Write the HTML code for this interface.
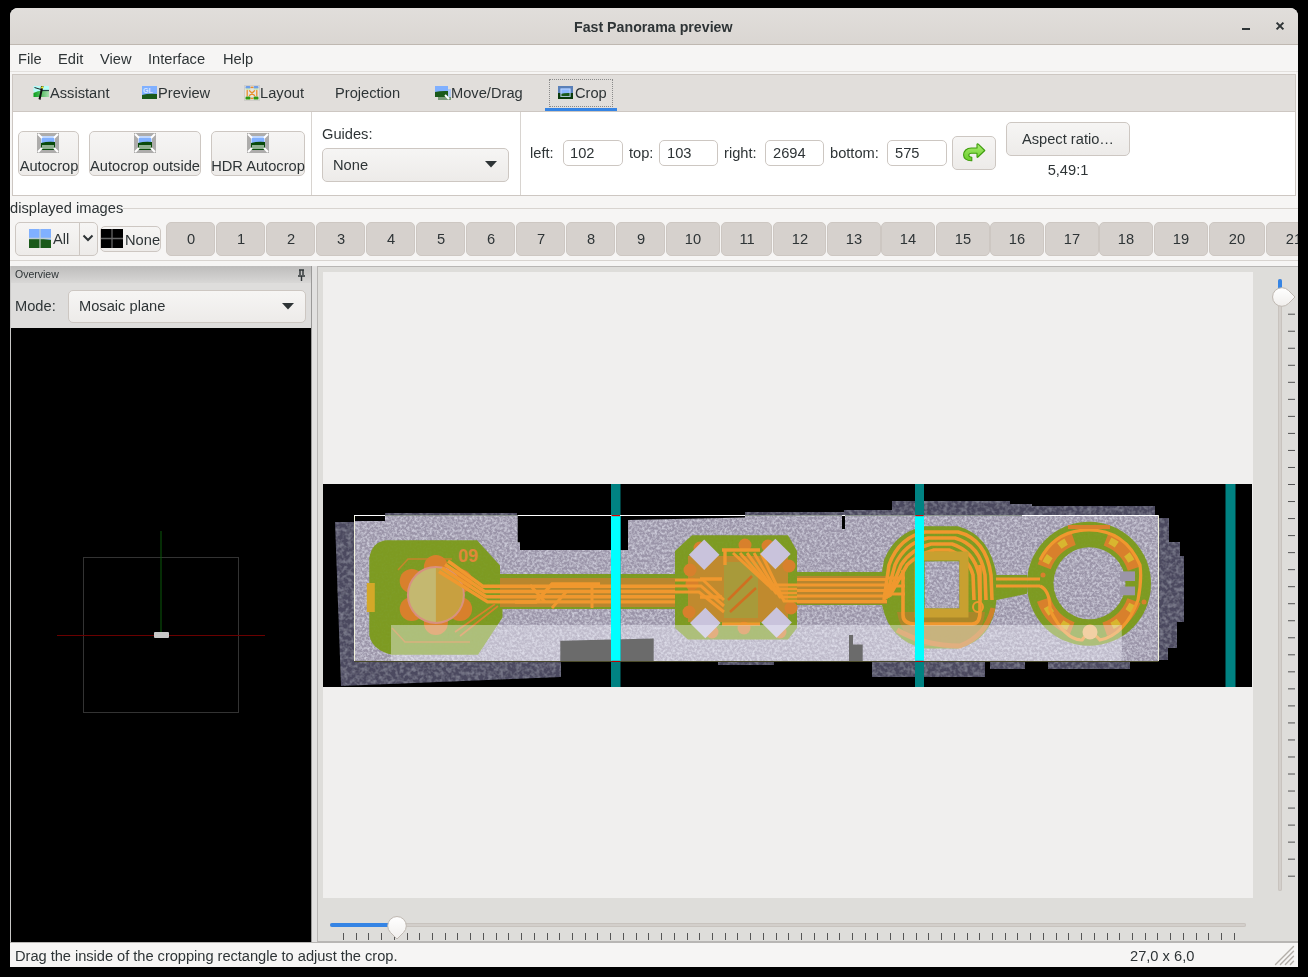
<!DOCTYPE html>
<html><head><meta charset="utf-8"><style>
html,body{margin:0;padding:0;width:1308px;height:977px;overflow:hidden;background:#000;}
body{position:relative;font-family:"Liberation Sans", sans-serif;}
</style></head><body>
<div style="position:absolute;left:10px;top:8px;width:1288px;height:959px;background:#f6f5f4;border-radius:8px 8px 0 0;overflow:hidden;"></div>
<div style="position:absolute;left:10px;top:8px;width:1288px;height:36px;background:linear-gradient(#e1dedb,#dad6d2);border-radius:8px 8px 0 0;"></div>
<div style="position:absolute;left:10px;top:44px;width:1288px;height:1px;background:#bfb8b1;"></div>
<div style="position:absolute;left:574px;top:19.78px;font-size:14.2px;line-height:14.2px;color:#2e3436;font-weight:bold;white-space:nowrap;will-change:transform;">Fast Panorama preview</div>
<div style="position:absolute;left:1242px;top:28px;width:8px;height:2px;background:#2e3436;"></div>
<svg style="position:absolute;left:1275px;top:21px;" width="10" height="10" viewBox="0 0 10 10"><path d="M1.6 1.6L8.4 8.4M8.4 1.6L1.6 8.4" stroke="#2e3436" stroke-width="2"/></svg>
<div style="position:absolute;left:10px;top:71px;width:1288px;height:1px;background:#e3e0dd;"></div>
<div style="position:absolute;left:18px;top:51.58px;font-size:14.67px;line-height:14.67px;color:#2e3436;font-weight:normal;white-space:nowrap;will-change:transform;">File</div>
<div style="position:absolute;left:58px;top:51.58px;font-size:14.67px;line-height:14.67px;color:#2e3436;font-weight:normal;white-space:nowrap;will-change:transform;">Edit</div>
<div style="position:absolute;left:100px;top:51.58px;font-size:14.67px;line-height:14.67px;color:#2e3436;font-weight:normal;white-space:nowrap;will-change:transform;">View</div>
<div style="position:absolute;left:148px;top:51.58px;font-size:14.67px;line-height:14.67px;color:#2e3436;font-weight:normal;white-space:nowrap;will-change:transform;">Interface</div>
<div style="position:absolute;left:223px;top:51.58px;font-size:14.67px;line-height:14.67px;color:#2e3436;font-weight:normal;white-space:nowrap;will-change:transform;">Help</div>
<div style="position:absolute;left:12px;top:74px;width:1284px;height:122px;box-sizing:border-box;border:1px solid #cdc7c2;background:#fff;"></div>
<div style="position:absolute;left:13px;top:75px;width:1282px;height:36px;background:#e1dedb;"></div>
<div style="position:absolute;left:13px;top:111px;width:1282px;height:1px;background:#cdc7c2;"></div>
<svg style="position:absolute;left:33px;top:83px;" width="17" height="18" viewBox="0 0 17 18"><defs><linearGradient id="ag" x1="0" x2="1"><stop offset="0" stop-color="#06a01a"/><stop offset="1" stop-color="#a8dcae"/></linearGradient></defs>
<rect x="0.5" y="3" width="15.5" height="6" fill="#b4fcf8"/><path d="M0.5 10 Q5 7.5 9 7.5 L16 7.5 V14 H0.5Z" fill="url(#ag)"/>
<path d="M1.5 4.5 L8 6.5" stroke="#222" stroke-width="1"/><path d="M9 7.5 L16 7.5" stroke="#244" stroke-width="1.2"/>
<path d="M8 3 L10.5 3 L8.5 12 L7.5 17 L5.5 16 L7 10Z" fill="#111"/><circle cx="9.3" cy="4.4" r="1.2" fill="#f0f030"/></svg>
<div style="position:absolute;left:50px;top:85.88px;font-size:14.67px;line-height:14.67px;color:#2e3436;font-weight:normal;white-space:nowrap;will-change:transform;">Assistant</div>
<svg style="position:absolute;left:141px;top:84px;" width="16" height="16" viewBox="0 0 16 16"><rect x="1" y="2" width="15" height="13" fill="#80b0ff"/><path d="M1 11 Q8 9 16 10 V15 H1Z" fill="#1a5a1a"/>
<text x="2" y="9" font-size="7" font-family="Liberation Sans" fill="#d8e6ff" font-weight="bold">GL</text></svg>
<div style="position:absolute;left:158px;top:85.88px;font-size:14.67px;line-height:14.67px;color:#2e3436;font-weight:normal;white-space:nowrap;will-change:transform;">Preview</div>
<svg style="position:absolute;left:244px;top:85px;" width="16" height="16" viewBox="0 0 16 16"><rect x="0.5" y="0.5" width="15" height="15" fill="#e6e4e2" stroke="#cfcdcb"/>
<rect x="1.5" y="1" width="5" height="2.8" rx="1" fill="#6f9ee8"/><rect x="9.5" y="1" width="5" height="2.8" rx="1" fill="#6f9ee8"/>
<rect x="1.5" y="3.5" width="5" height="1.2" fill="#c8e8b0"/><rect x="9.5" y="3.5" width="5" height="1.2" fill="#c8e8b0"/>
<rect x="1.5" y="11.6" width="5" height="3" rx="1.2" fill="#2f9a12"/><rect x="9.5" y="11.6" width="5" height="3" rx="1.2" fill="#2f9a12"/>
<path d="M3.2 5.5V10.8M12.8 5.5V10.8M5.5 5.8L10.5 10.5M10.5 5.8L5.5 10.5" stroke="#e8902a" stroke-width="1.3" stroke-linecap="round"/>
<ellipse cx="8" cy="2.4" rx="1.6" ry="0.8" fill="#e8902a"/><ellipse cx="8" cy="13.4" rx="1.4" ry="0.8" fill="#e8902a"/></svg>
<div style="position:absolute;left:259.8px;top:85.88px;font-size:14.67px;line-height:14.67px;color:#2e3436;font-weight:normal;white-space:nowrap;will-change:transform;">Layout</div>
<div style="position:absolute;left:335px;top:85.88px;font-size:14.67px;line-height:14.67px;color:#2e3436;font-weight:normal;white-space:nowrap;will-change:transform;">Projection</div>
<svg style="position:absolute;left:434px;top:84px;" width="17" height="16" viewBox="0 0 17 16"><rect x="4" y="5" width="13" height="11" fill="#7a9a7a"/><rect x="13" y="5" width="4" height="8" fill="#b0c8f0"/>
<rect x="1" y="2" width="13" height="11" fill="#80b0ff"/><path d="M1 8 Q7 6.5 14 7 V13 H1Z" fill="#1a5a1a"/>
<path d="M11 11 L15 15" stroke="#fff" stroke-width="2"/></svg>
<div style="position:absolute;left:451.2px;top:85.88px;font-size:14.67px;line-height:14.67px;color:#2e3436;font-weight:normal;white-space:nowrap;will-change:transform;">Move/Drag</div>
<svg style="position:absolute;left:557px;top:84px;" width="16" height="16" viewBox="0 0 16 16"><rect x="1" y="2" width="15" height="7" fill="#5a80b8"/><rect x="1" y="9" width="15" height="6" fill="#0a3a0a"/>
<rect x="3.5" y="4.5" width="10" height="8.5" fill="#8ab8ff"/><path d="M3.5 10 Q8 8.5 13.5 9 V13 H3.5Z" fill="#1a5a1a"/>
<rect x="4" y="5" width="9" height="7.5" fill="none" stroke="#c8dcff" stroke-width="1" opacity="0.8"/></svg>
<div style="position:absolute;left:574.6px;top:85.88px;font-size:14.67px;line-height:14.67px;color:#2e3436;font-weight:normal;white-space:nowrap;will-change:transform;">Crop</div>
<div style="position:absolute;left:549px;top:79px;width:64px;height:28px;box-sizing:border-box;border:1px dotted #8a8a8a;"></div>
<div style="position:absolute;left:545px;top:108px;width:72px;height:3px;background:#3584e4;"></div>
<div style="position:absolute;left:18px;top:131px;width:61px;height:45px;box-sizing:border-box;border:1px solid #cdc7c2;border-radius:5px;background:linear-gradient(#f6f5f4,#edebe9);"></div>
<svg style="position:absolute;left:37px;top:133px;" width="22" height="20" viewBox="0 0 22 20"><rect x="0" y="0" width="22" height="20" fill="#adacab"/>
<rect x="4" y="3" width="14" height="14" fill="#c0d8ff"/><rect x="5" y="5" width="12" height="5" fill="#80b0ff"/>
<path d="M4 10 Q11 8 18 9 V17 H4Z" fill="#0a4a0a"/><rect x="5" y="12" width="12" height="4" fill="#90b090"/>
<path d="M1 1L5 5M21 1L17 5M1 19L5 15M21 19L17 15" stroke="#fff" stroke-width="2"/></svg>
<div style="position:absolute;left:-151.5px;width:400px;text-align:center;top:158.88px;font-size:14.67px;line-height:14.67px;color:#2e3436;font-weight:normal;white-space:nowrap;will-change:transform;">Autocrop</div>
<div style="position:absolute;left:89px;top:131px;width:112px;height:45px;box-sizing:border-box;border:1px solid #cdc7c2;border-radius:5px;background:linear-gradient(#f6f5f4,#edebe9);"></div>
<svg style="position:absolute;left:134px;top:133px;" width="22" height="20" viewBox="0 0 22 20"><rect x="0" y="0" width="22" height="20" fill="#adacab"/>
<rect x="4" y="3" width="14" height="14" fill="#c0d8ff"/><rect x="5" y="5" width="12" height="5" fill="#80b0ff"/>
<path d="M4 10 Q11 8 18 9 V17 H4Z" fill="#0a4a0a"/><rect x="5" y="12" width="12" height="4" fill="#90b090"/>
<path d="M1 1L5 5M21 1L17 5M1 19L5 15M21 19L17 15" stroke="#fff" stroke-width="2"/></svg>
<div style="position:absolute;left:-55.0px;width:400px;text-align:center;top:158.88px;font-size:14.67px;line-height:14.67px;color:#2e3436;font-weight:normal;white-space:nowrap;will-change:transform;">Autocrop outside</div>
<div style="position:absolute;left:211px;top:131px;width:94px;height:45px;box-sizing:border-box;border:1px solid #cdc7c2;border-radius:5px;background:linear-gradient(#f6f5f4,#edebe9);"></div>
<svg style="position:absolute;left:247px;top:133px;" width="22" height="20" viewBox="0 0 22 20"><rect x="0" y="0" width="22" height="20" fill="#adacab"/>
<rect x="4" y="3" width="14" height="14" fill="#c0d8ff"/><rect x="5" y="5" width="12" height="5" fill="#80b0ff"/>
<path d="M4 10 Q11 8 18 9 V17 H4Z" fill="#0a4a0a"/><rect x="5" y="12" width="12" height="4" fill="#90b090"/>
<path d="M1 1L5 5M21 1L17 5M1 19L5 15M21 19L17 15" stroke="#fff" stroke-width="2"/></svg>
<div style="position:absolute;left:58.0px;width:400px;text-align:center;top:158.88px;font-size:14.67px;line-height:14.67px;color:#2e3436;font-weight:normal;white-space:nowrap;will-change:transform;">HDR Autocrop</div>
<div style="position:absolute;left:311px;top:112px;width:1px;height:83px;background:#d8d4d0;"></div>
<div style="position:absolute;left:520px;top:112px;width:1px;height:83px;background:#d8d4d0;"></div>
<div style="position:absolute;left:321.9px;top:126.58px;font-size:14.67px;line-height:14.67px;color:#2e3436;font-weight:normal;white-space:nowrap;will-change:transform;">Guides:</div>
<div style="position:absolute;left:322px;top:148px;width:187px;height:34px;box-sizing:border-box;border:1px solid #cdc7c2;border-radius:5px;background:linear-gradient(#f6f5f4,#edebe9);"></div>
<div style="position:absolute;left:333px;top:157.58px;font-size:14.67px;line-height:14.67px;color:#2e3436;font-weight:normal;white-space:nowrap;will-change:transform;">None</div>
<svg style="position:absolute;left:485px;top:161px;" width="12" height="7" viewBox="0 0 12 7"><path d="M0 0H12L6 6.5Z" fill="#2e3436"/></svg>
<div style="position:absolute;left:530px;top:146.08px;font-size:14.67px;line-height:14.67px;color:#2e3436;font-weight:normal;white-space:nowrap;will-change:transform;">left:</div>
<div style="position:absolute;left:563px;top:140px;width:60px;height:26px;box-sizing:border-box;border:1px solid #cdc7c2;border-radius:5px;background:#fff;"></div>
<div style="position:absolute;left:570.4px;top:145.78px;font-size:14.67px;line-height:14.67px;color:#2e3436;font-weight:normal;white-space:nowrap;will-change:transform;">102</div>
<div style="position:absolute;left:628.6px;top:146.08px;font-size:14.67px;line-height:14.67px;color:#2e3436;font-weight:normal;white-space:nowrap;will-change:transform;">top:</div>
<div style="position:absolute;left:659px;top:140px;width:59px;height:26px;box-sizing:border-box;border:1px solid #cdc7c2;border-radius:5px;background:#fff;"></div>
<div style="position:absolute;left:666.5px;top:145.78px;font-size:14.67px;line-height:14.67px;color:#2e3436;font-weight:normal;white-space:nowrap;will-change:transform;">103</div>
<div style="position:absolute;left:724.3px;top:146.08px;font-size:14.67px;line-height:14.67px;color:#2e3436;font-weight:normal;white-space:nowrap;will-change:transform;">right:</div>
<div style="position:absolute;left:765px;top:140px;width:59px;height:26px;box-sizing:border-box;border:1px solid #cdc7c2;border-radius:5px;background:#fff;"></div>
<div style="position:absolute;left:772.5px;top:145.78px;font-size:14.67px;line-height:14.67px;color:#2e3436;font-weight:normal;white-space:nowrap;will-change:transform;">2694</div>
<div style="position:absolute;left:830.3px;top:146.08px;font-size:14.67px;line-height:14.67px;color:#2e3436;font-weight:normal;white-space:nowrap;will-change:transform;">bottom:</div>
<div style="position:absolute;left:887px;top:140px;width:60px;height:26px;box-sizing:border-box;border:1px solid #cdc7c2;border-radius:5px;background:#fff;"></div>
<div style="position:absolute;left:894.5px;top:145.78px;font-size:14.67px;line-height:14.67px;color:#2e3436;font-weight:normal;white-space:nowrap;will-change:transform;">575</div>
<div style="position:absolute;left:952px;top:136px;width:44px;height:34px;box-sizing:border-box;border:1px solid #cdc7c2;border-radius:5px;background:linear-gradient(#f6f5f4,#edebe9);"></div>
<svg style="position:absolute;left:962px;top:142px;" width="25" height="20" viewBox="0 0 25 20"><defs><linearGradient id="arg" x1="0" y1="0" x2="0" y2="1"><stop offset="0" stop-color="#a8ec70"/><stop offset="1" stop-color="#68cc28"/></linearGradient></defs><path d="M15 2.3 Q15.5 1.5 16.3 2.2 L22.8 8.5 L16 15 Q15 15.8 15 14.8 V11.3 H9.5 C7.8 11.3 6.8 12 6.8 13.3 C6.8 14.6 8 15.2 9.8 15.2 V18.8 H9.3 C4.5 18.8 1.6 16.2 1.6 13 C1.6 9 4.6 6 9.3 6 H15Z" fill="url(#arg)" stroke="#3e9c0c" stroke-width="1.1" stroke-linejoin="round"/></svg>
<div style="position:absolute;left:1006px;top:122px;width:124px;height:34px;box-sizing:border-box;border:1px solid #cdc7c2;border-radius:5px;background:linear-gradient(#f6f5f4,#edebe9);"></div>
<div style="position:absolute;left:868px;width:400px;text-align:center;top:131.98px;font-size:14.67px;line-height:14.67px;color:#2e3436;font-weight:normal;white-space:nowrap;will-change:transform;">Aspect ratio…</div>
<div style="position:absolute;left:868px;width:400px;text-align:center;top:163.28px;font-size:14.67px;line-height:14.67px;color:#2e3436;font-weight:normal;white-space:nowrap;will-change:transform;">5,49:1</div>
<div style="position:absolute;left:9.7px;top:200.98px;font-size:14.67px;line-height:14.67px;color:#2e3436;font-weight:normal;white-space:nowrap;will-change:transform;">displayed images</div>
<div style="position:absolute;left:123px;top:208px;width:1175px;height:1px;background:#d8d4d0;"></div>
<div style="position:absolute;left:10px;top:260px;width:1288px;height:1px;background:#d8d4d0;"></div>
<div style="position:absolute;left:15px;top:222px;width:65px;height:34px;box-sizing:border-box;border:1px solid #cdc7c2;border-radius:5px;background:linear-gradient(#f6f5f4,#edebe9);border-radius:5px 0 0 5px;"></div>
<div style="position:absolute;left:79px;top:222px;width:19px;height:34px;box-sizing:border-box;border:1px solid #cdc7c2;border-radius:5px;background:linear-gradient(#f6f5f4,#edebe9);border-radius:0 5px 5px 0;"></div>
<svg style="position:absolute;left:82px;top:234px;" width="12" height="9" viewBox="0 0 12 9"><path d="M1.5 1.5L6 6L10.5 1.5" stroke="#2e3436" stroke-width="2" fill="none"/></svg>
<svg style="position:absolute;left:29px;top:229px;" width="22" height="19" viewBox="0 0 22 19"><rect width="22" height="19" fill="#80b0ff"/><path d="M0 10 Q11 9 22 11 V19 H0Z" fill="#1a5a1a"/>
<path d="M11 0V19M0 9.5H22" stroke="#d0d8d0" stroke-width="1.3" opacity="0.8"/></svg>
<div style="position:absolute;left:53px;top:231.58px;font-size:14.67px;line-height:14.67px;color:#2e3436;font-weight:normal;white-space:nowrap;will-change:transform;">All</div>
<div style="position:absolute;left:100px;top:226px;width:61px;height:26px;box-sizing:border-box;border:1px solid #cdc7c2;border-radius:5px;background:linear-gradient(#f6f5f4,#edebe9);"></div>
<svg style="position:absolute;left:101px;top:229px;" width="22" height="19" viewBox="0 0 22 19"><rect width="22" height="19" fill="#000"/><path d="M11 0V19M0 9.5H22" stroke="#666" stroke-width="1.3"/></svg>
<div style="position:absolute;left:125px;top:232.58px;font-size:14.67px;line-height:14.67px;color:#2e3436;font-weight:normal;white-space:nowrap;will-change:transform;">None</div>
<div style="position:absolute;left:166px;top:222px;width:49px;height:34px;box-sizing:border-box;border:1px solid #cdc7c2;border-radius:5px;background:#d6d1cd;"></div>
<div style="position:absolute;left:-9.5px;width:400px;text-align:center;top:231.58px;font-size:14.67px;line-height:14.67px;color:#2e3436;font-weight:normal;white-space:nowrap;will-change:transform;">0</div>
<div style="position:absolute;left:216px;top:222px;width:49px;height:34px;box-sizing:border-box;border:1px solid #cdc7c2;border-radius:5px;background:#d6d1cd;"></div>
<div style="position:absolute;left:40.5px;width:400px;text-align:center;top:231.58px;font-size:14.67px;line-height:14.67px;color:#2e3436;font-weight:normal;white-space:nowrap;will-change:transform;">1</div>
<div style="position:absolute;left:266px;top:222px;width:49px;height:34px;box-sizing:border-box;border:1px solid #cdc7c2;border-radius:5px;background:#d6d1cd;"></div>
<div style="position:absolute;left:90.5px;width:400px;text-align:center;top:231.58px;font-size:14.67px;line-height:14.67px;color:#2e3436;font-weight:normal;white-space:nowrap;will-change:transform;">2</div>
<div style="position:absolute;left:316px;top:222px;width:49px;height:34px;box-sizing:border-box;border:1px solid #cdc7c2;border-radius:5px;background:#d6d1cd;"></div>
<div style="position:absolute;left:140.5px;width:400px;text-align:center;top:231.58px;font-size:14.67px;line-height:14.67px;color:#2e3436;font-weight:normal;white-space:nowrap;will-change:transform;">3</div>
<div style="position:absolute;left:366px;top:222px;width:49px;height:34px;box-sizing:border-box;border:1px solid #cdc7c2;border-radius:5px;background:#d6d1cd;"></div>
<div style="position:absolute;left:190.5px;width:400px;text-align:center;top:231.58px;font-size:14.67px;line-height:14.67px;color:#2e3436;font-weight:normal;white-space:nowrap;will-change:transform;">4</div>
<div style="position:absolute;left:416px;top:222px;width:49px;height:34px;box-sizing:border-box;border:1px solid #cdc7c2;border-radius:5px;background:#d6d1cd;"></div>
<div style="position:absolute;left:240.5px;width:400px;text-align:center;top:231.58px;font-size:14.67px;line-height:14.67px;color:#2e3436;font-weight:normal;white-space:nowrap;will-change:transform;">5</div>
<div style="position:absolute;left:466px;top:222px;width:49px;height:34px;box-sizing:border-box;border:1px solid #cdc7c2;border-radius:5px;background:#d6d1cd;"></div>
<div style="position:absolute;left:290.5px;width:400px;text-align:center;top:231.58px;font-size:14.67px;line-height:14.67px;color:#2e3436;font-weight:normal;white-space:nowrap;will-change:transform;">6</div>
<div style="position:absolute;left:516px;top:222px;width:49px;height:34px;box-sizing:border-box;border:1px solid #cdc7c2;border-radius:5px;background:#d6d1cd;"></div>
<div style="position:absolute;left:340.5px;width:400px;text-align:center;top:231.58px;font-size:14.67px;line-height:14.67px;color:#2e3436;font-weight:normal;white-space:nowrap;will-change:transform;">7</div>
<div style="position:absolute;left:566px;top:222px;width:49px;height:34px;box-sizing:border-box;border:1px solid #cdc7c2;border-radius:5px;background:#d6d1cd;"></div>
<div style="position:absolute;left:390.5px;width:400px;text-align:center;top:231.58px;font-size:14.67px;line-height:14.67px;color:#2e3436;font-weight:normal;white-space:nowrap;will-change:transform;">8</div>
<div style="position:absolute;left:616px;top:222px;width:49px;height:34px;box-sizing:border-box;border:1px solid #cdc7c2;border-radius:5px;background:#d6d1cd;"></div>
<div style="position:absolute;left:440.5px;width:400px;text-align:center;top:231.58px;font-size:14.67px;line-height:14.67px;color:#2e3436;font-weight:normal;white-space:nowrap;will-change:transform;">9</div>
<div style="position:absolute;left:666px;top:222px;width:54px;height:34px;box-sizing:border-box;border:1px solid #cdc7c2;border-radius:5px;background:#d6d1cd;"></div>
<div style="position:absolute;left:493.0px;width:400px;text-align:center;top:231.58px;font-size:14.67px;line-height:14.67px;color:#2e3436;font-weight:normal;white-space:nowrap;will-change:transform;">10</div>
<div style="position:absolute;left:721px;top:222px;width:51px;height:34px;box-sizing:border-box;border:1px solid #cdc7c2;border-radius:5px;background:#d6d1cd;"></div>
<div style="position:absolute;left:546.5px;width:400px;text-align:center;top:231.58px;font-size:14.67px;line-height:14.67px;color:#2e3436;font-weight:normal;white-space:nowrap;will-change:transform;">11</div>
<div style="position:absolute;left:773px;top:222px;width:53px;height:34px;box-sizing:border-box;border:1px solid #cdc7c2;border-radius:5px;background:#d6d1cd;"></div>
<div style="position:absolute;left:599.5px;width:400px;text-align:center;top:231.58px;font-size:14.67px;line-height:14.67px;color:#2e3436;font-weight:normal;white-space:nowrap;will-change:transform;">12</div>
<div style="position:absolute;left:827px;top:222px;width:54px;height:34px;box-sizing:border-box;border:1px solid #cdc7c2;border-radius:5px;background:#d6d1cd;"></div>
<div style="position:absolute;left:654.0px;width:400px;text-align:center;top:231.58px;font-size:14.67px;line-height:14.67px;color:#2e3436;font-weight:normal;white-space:nowrap;will-change:transform;">13</div>
<div style="position:absolute;left:881px;top:222px;width:54px;height:34px;box-sizing:border-box;border:1px solid #cdc7c2;border-radius:5px;background:#d6d1cd;"></div>
<div style="position:absolute;left:708.0px;width:400px;text-align:center;top:231.58px;font-size:14.67px;line-height:14.67px;color:#2e3436;font-weight:normal;white-space:nowrap;will-change:transform;">14</div>
<div style="position:absolute;left:936px;top:222px;width:54px;height:34px;box-sizing:border-box;border:1px solid #cdc7c2;border-radius:5px;background:#d6d1cd;"></div>
<div style="position:absolute;left:763.0px;width:400px;text-align:center;top:231.58px;font-size:14.67px;line-height:14.67px;color:#2e3436;font-weight:normal;white-space:nowrap;will-change:transform;">15</div>
<div style="position:absolute;left:990px;top:222px;width:54px;height:34px;box-sizing:border-box;border:1px solid #cdc7c2;border-radius:5px;background:#d6d1cd;"></div>
<div style="position:absolute;left:817.0px;width:400px;text-align:center;top:231.58px;font-size:14.67px;line-height:14.67px;color:#2e3436;font-weight:normal;white-space:nowrap;will-change:transform;">16</div>
<div style="position:absolute;left:1045px;top:222px;width:54px;height:34px;box-sizing:border-box;border:1px solid #cdc7c2;border-radius:5px;background:#d6d1cd;"></div>
<div style="position:absolute;left:872.0px;width:400px;text-align:center;top:231.58px;font-size:14.67px;line-height:14.67px;color:#2e3436;font-weight:normal;white-space:nowrap;will-change:transform;">17</div>
<div style="position:absolute;left:1099px;top:222px;width:54px;height:34px;box-sizing:border-box;border:1px solid #cdc7c2;border-radius:5px;background:#d6d1cd;"></div>
<div style="position:absolute;left:926.0px;width:400px;text-align:center;top:231.58px;font-size:14.67px;line-height:14.67px;color:#2e3436;font-weight:normal;white-space:nowrap;will-change:transform;">18</div>
<div style="position:absolute;left:1154px;top:222px;width:54px;height:34px;box-sizing:border-box;border:1px solid #cdc7c2;border-radius:5px;background:#d6d1cd;"></div>
<div style="position:absolute;left:981.0px;width:400px;text-align:center;top:231.58px;font-size:14.67px;line-height:14.67px;color:#2e3436;font-weight:normal;white-space:nowrap;will-change:transform;">19</div>
<div style="position:absolute;left:1209px;top:222px;width:56px;height:34px;box-sizing:border-box;border:1px solid #cdc7c2;border-radius:5px;background:#d6d1cd;"></div>
<div style="position:absolute;left:1037.0px;width:400px;text-align:center;top:231.58px;font-size:14.67px;line-height:14.67px;color:#2e3436;font-weight:normal;white-space:nowrap;will-change:transform;">20</div>
<div style="position:absolute;left:1266px;top:222px;width:56px;height:34px;box-sizing:border-box;border:1px solid #cdc7c2;border-radius:5px;background:#d6d1cd;"></div>
<div style="position:absolute;left:1094.0px;width:400px;text-align:center;top:231.58px;font-size:14.67px;line-height:14.67px;color:#2e3436;font-weight:normal;white-space:nowrap;will-change:transform;">21</div>
<div style="position:absolute;left:10px;top:266px;width:302px;height:676px;background:#000;"></div>
<div style="position:absolute;left:10px;top:266px;width:301px;height:17px;background:linear-gradient(#bdbcbb,#d8d7d6);"></div>
<div style="position:absolute;left:10px;top:283px;width:301px;height:45px;background:#dedddc;"></div>
<div style="position:absolute;left:311px;top:266px;width:1px;height:676px;background:#9a9998;"></div>
<div style="position:absolute;left:312px;top:266px;width:5px;height:676px;background:#e2e1e0;"></div>
<div style="position:absolute;left:10px;top:266px;width:1px;height:676px;background:#c8c7c6;"></div>
<div style="position:absolute;left:14.7px;top:268.91px;font-size:10.5px;line-height:10.5px;color:#2e3436;font-weight:normal;white-space:nowrap;will-change:transform;">Overview</div>
<svg style="position:absolute;left:297px;top:269px;" width="9" height="12" viewBox="0 0 9 12"><path d="M2 1H7M3 1V6M6 1V6M1 7H8M4.5 7V12" stroke="#2e3436" stroke-width="1.4" fill="none"/></svg>
<div style="position:absolute;left:15px;top:298.58px;font-size:14.67px;line-height:14.67px;color:#2e3436;font-weight:normal;white-space:nowrap;will-change:transform;">Mode:</div>
<div style="position:absolute;left:68px;top:290px;width:238px;height:33px;box-sizing:border-box;border:1px solid #cdc7c2;border-radius:5px;background:linear-gradient(#f6f5f4,#edebe9);"></div>
<div style="position:absolute;left:79px;top:298.58px;font-size:14.67px;line-height:14.67px;color:#2e3436;font-weight:normal;white-space:nowrap;will-change:transform;">Mosaic plane</div>
<svg style="position:absolute;left:282px;top:303px;" width="12" height="7" viewBox="0 0 12 7"><path d="M0 0H12L6 6.5Z" fill="#2e3436"/></svg>
<svg style="position:absolute;left:11px;top:328px;" width="300" height="614" viewBox="0 0 300 614"><rect x="72.5" y="229.5" width="155" height="155" fill="none" stroke="#333" stroke-width="1"/>
<path d="M150 203V307" stroke="#0a5a0a" stroke-width="1"/>
<path d="M46 307.5H254" stroke="#6a0000" stroke-width="1"/>
<rect x="143" y="304" width="15" height="6" rx="1" fill="#c8c8c8"/></svg>
<div style="position:absolute;left:317px;top:266px;width:981px;height:676px;box-sizing:border-box;border:1px solid #b8b6b4;border-right:none;background:#deddda;"></div>
<div style="position:absolute;left:323px;top:272px;width:930px;height:626px;background:#f0efee;"></div>
<div style="position:absolute;left:330px;top:923px;width:916px;height:4px;background:#d3cfcb;border-radius:2px;box-shadow:inset 0 0 0 1px #c8c3be;"></div>
<div style="position:absolute;left:330px;top:923px;width:67px;height:4px;background:#3584e4;border-radius:2px;"></div>
<svg style="position:absolute;left:330px;top:933px;" width="916" height="8" viewBox="0 0 916 8"><rect x="13" y="0" width="1" height="7" fill="#555"/><rect x="26" y="0" width="1" height="7" fill="#555"/><rect x="38" y="0" width="1" height="7" fill="#555"/><rect x="51" y="0" width="1" height="7" fill="#555"/><rect x="64" y="0" width="1" height="7" fill="#555"/><rect x="77" y="0" width="1" height="7" fill="#555"/><rect x="89" y="0" width="1" height="7" fill="#555"/><rect x="102" y="0" width="1" height="7" fill="#555"/><rect x="115" y="0" width="1" height="7" fill="#555"/><rect x="127" y="0" width="1" height="7" fill="#555"/><rect x="140" y="0" width="1" height="7" fill="#555"/><rect x="153" y="0" width="1" height="7" fill="#555"/><rect x="166" y="0" width="1" height="7" fill="#555"/><rect x="178" y="0" width="1" height="7" fill="#555"/><rect x="191" y="0" width="1" height="7" fill="#555"/><rect x="204" y="0" width="1" height="7" fill="#555"/><rect x="217" y="0" width="1" height="7" fill="#555"/><rect x="229" y="0" width="1" height="7" fill="#555"/><rect x="242" y="0" width="1" height="7" fill="#555"/><rect x="255" y="0" width="1" height="7" fill="#555"/><rect x="267" y="0" width="1" height="7" fill="#555"/><rect x="280" y="0" width="1" height="7" fill="#555"/><rect x="293" y="0" width="1" height="7" fill="#555"/><rect x="306" y="0" width="1" height="7" fill="#555"/><rect x="318" y="0" width="1" height="7" fill="#555"/><rect x="331" y="0" width="1" height="7" fill="#555"/><rect x="344" y="0" width="1" height="7" fill="#555"/><rect x="357" y="0" width="1" height="7" fill="#555"/><rect x="369" y="0" width="1" height="7" fill="#555"/><rect x="382" y="0" width="1" height="7" fill="#555"/><rect x="395" y="0" width="1" height="7" fill="#555"/><rect x="407" y="0" width="1" height="7" fill="#555"/><rect x="420" y="0" width="1" height="7" fill="#555"/><rect x="433" y="0" width="1" height="7" fill="#555"/><rect x="446" y="0" width="1" height="7" fill="#555"/><rect x="458" y="0" width="1" height="7" fill="#555"/><rect x="471" y="0" width="1" height="7" fill="#555"/><rect x="484" y="0" width="1" height="7" fill="#555"/><rect x="497" y="0" width="1" height="7" fill="#555"/><rect x="509" y="0" width="1" height="7" fill="#555"/><rect x="522" y="0" width="1" height="7" fill="#555"/><rect x="535" y="0" width="1" height="7" fill="#555"/><rect x="547" y="0" width="1" height="7" fill="#555"/><rect x="560" y="0" width="1" height="7" fill="#555"/><rect x="573" y="0" width="1" height="7" fill="#555"/><rect x="586" y="0" width="1" height="7" fill="#555"/><rect x="598" y="0" width="1" height="7" fill="#555"/><rect x="611" y="0" width="1" height="7" fill="#555"/><rect x="624" y="0" width="1" height="7" fill="#555"/><rect x="637" y="0" width="1" height="7" fill="#555"/><rect x="649" y="0" width="1" height="7" fill="#555"/><rect x="662" y="0" width="1" height="7" fill="#555"/><rect x="675" y="0" width="1" height="7" fill="#555"/><rect x="687" y="0" width="1" height="7" fill="#555"/><rect x="700" y="0" width="1" height="7" fill="#555"/><rect x="713" y="0" width="1" height="7" fill="#555"/><rect x="726" y="0" width="1" height="7" fill="#555"/><rect x="738" y="0" width="1" height="7" fill="#555"/><rect x="751" y="0" width="1" height="7" fill="#555"/><rect x="764" y="0" width="1" height="7" fill="#555"/><rect x="777" y="0" width="1" height="7" fill="#555"/><rect x="789" y="0" width="1" height="7" fill="#555"/><rect x="802" y="0" width="1" height="7" fill="#555"/><rect x="815" y="0" width="1" height="7" fill="#555"/><rect x="827" y="0" width="1" height="7" fill="#555"/><rect x="840" y="0" width="1" height="7" fill="#555"/><rect x="853" y="0" width="1" height="7" fill="#555"/><rect x="866" y="0" width="1" height="7" fill="#555"/><rect x="878" y="0" width="1" height="7" fill="#555"/><rect x="891" y="0" width="1" height="7" fill="#555"/><rect x="904" y="0" width="1" height="7" fill="#555"/></svg>
<svg style="position:absolute;left:386px;top:915px;" width="22" height="26" viewBox="0 0 22 26"><defs><linearGradient id="th" x1="0" y1="0" x2="0" y2="1"><stop offset="0" stop-color="#fff"/><stop offset="1" stop-color="#f0eeec"/></linearGradient></defs>
<path d="M11 24 L4.5 17.5 A9.3 9.3 0 1 1 17.5 17.5 Z" fill="url(#th)" stroke="#bfb8b1" stroke-width="1"/></svg>
<div style="position:absolute;left:1278px;top:279px;width:4px;height:612px;background:#d3cfcb;border-radius:2px;box-shadow:inset 0 0 0 1px #c8c3be;"></div>
<div style="position:absolute;left:1278px;top:279px;width:4px;height:18px;background:#3584e4;border-radius:2px;"></div>
<svg style="position:absolute;left:1288px;top:310px;" width="8" height="580" viewBox="0 0 8 580"><rect x="0" y="3.70" width="7" height="1" fill="#555"/><rect x="0" y="20.73" width="7" height="1" fill="#555"/><rect x="0" y="37.76" width="7" height="1" fill="#555"/><rect x="0" y="54.79" width="7" height="1" fill="#555"/><rect x="0" y="71.82" width="7" height="1" fill="#555"/><rect x="0" y="88.85" width="7" height="1" fill="#555"/><rect x="0" y="105.88" width="7" height="1" fill="#555"/><rect x="0" y="122.91" width="7" height="1" fill="#555"/><rect x="0" y="139.94" width="7" height="1" fill="#555"/><rect x="0" y="156.97" width="7" height="1" fill="#555"/><rect x="0" y="174.00" width="7" height="1" fill="#555"/><rect x="0" y="191.03" width="7" height="1" fill="#555"/><rect x="0" y="208.06" width="7" height="1" fill="#555"/><rect x="0" y="225.09" width="7" height="1" fill="#555"/><rect x="0" y="242.12" width="7" height="1" fill="#555"/><rect x="0" y="259.15" width="7" height="1" fill="#555"/><rect x="0" y="276.18" width="7" height="1" fill="#555"/><rect x="0" y="293.21" width="7" height="1" fill="#555"/><rect x="0" y="310.24" width="7" height="1" fill="#555"/><rect x="0" y="327.27" width="7" height="1" fill="#555"/><rect x="0" y="344.30" width="7" height="1" fill="#555"/><rect x="0" y="361.33" width="7" height="1" fill="#555"/><rect x="0" y="378.36" width="7" height="1" fill="#555"/><rect x="0" y="395.39" width="7" height="1" fill="#555"/><rect x="0" y="412.42" width="7" height="1" fill="#555"/><rect x="0" y="429.45" width="7" height="1" fill="#555"/><rect x="0" y="446.48" width="7" height="1" fill="#555"/><rect x="0" y="463.51" width="7" height="1" fill="#555"/><rect x="0" y="480.54" width="7" height="1" fill="#555"/><rect x="0" y="497.57" width="7" height="1" fill="#555"/><rect x="0" y="514.60" width="7" height="1" fill="#555"/><rect x="0" y="531.63" width="7" height="1" fill="#555"/><rect x="0" y="548.66" width="7" height="1" fill="#555"/><rect x="0" y="565.69" width="7" height="1" fill="#555"/></svg>
<svg style="position:absolute;left:1270px;top:286px;" width="27" height="22" viewBox="0 0 27 22"><path d="M25 11 L18.5 17.5 A9.3 9.3 0 1 1 18.5 4.5 Z" fill="url(#th)" stroke="#bfb8b1" stroke-width="1"/></svg>
<div style="position:absolute;left:10px;top:942px;width:1288px;height:1px;background:#b8b6b4;"></div>
<div style="position:absolute;left:15.1px;top:948.78px;font-size:14.67px;line-height:14.67px;color:#2e3436;font-weight:normal;white-space:nowrap;will-change:transform;letter-spacing:-0.035px;">Drag the inside of the cropping rectangle to adjust the crop.</div>
<div style="position:absolute;left:1129.8px;top:948.78px;font-size:14.67px;line-height:14.67px;color:#2e3436;font-weight:normal;white-space:nowrap;will-change:transform;">27,0 x 6,0</div>
<svg style="position:absolute;left:1270px;top:940px;" width="28" height="28" viewBox="0 0 28 28"><path d="M5.5 24.4L23.5 6.4M10.4 24.4L23.5 11.3M15.4 24.4L23.5 16.2M20.4 24.4L23.5 21.2" stroke="#b3aea9" stroke-width="1.4" stroke-linecap="round"/></svg>
<svg style="position:absolute;left:323px;top:484px" width="929" height="203" viewBox="323 484 929 203"><defs>
<filter id="noise" x="0" y="0" width="100%" height="100%">
<feTurbulence type="fractalNoise" baseFrequency="0.4" numOctaves="2" seed="7" result="n"/>
<feColorMatrix in="n" type="matrix" values="0 0 0 0 0.74  0 0 0 0 0.74  0 0 0 0 0.84  1.6 0 0 0 -0.60" result="w"/>
<feComposite in="w" in2="SourceGraphic" operator="in" result="wm"/>
<feMerge><feMergeNode in="SourceGraphic"/><feMergeNode in="wm"/></feMerge>
</filter>
<filter id="gnoise" x="0" y="0" width="100%" height="100%">
<feTurbulence type="fractalNoise" baseFrequency="0.5" numOctaves="1" seed="2" result="n"/>
<feColorMatrix in="n" type="matrix" values="0 0 0 0 0.2  0 0 0 0 0.25  0 0 0 0 0  0.5 0 0 0 -0.2" result="w"/>
<feComposite in="w" in2="SourceGraphic" operator="in" result="wm"/>
<feMerge><feMergeNode in="SourceGraphic"/><feMergeNode in="wm"/></feMerge>
</filter>
<filter id="dnoise" x="0" y="0" width="100%" height="100%">
<feTurbulence type="fractalNoise" baseFrequency="0.25" numOctaves="2" seed="11" result="n"/>
<feColorMatrix in="n" type="matrix" values="0 0 0 0 0.40  0 0 0 0 0.41  0 0 0 0 0.50  0.9 0 0 0 -0.35" result="w"/>
<feComposite in="w" in2="SourceGraphic" operator="in" result="wm"/>
<feMerge><feMergeNode in="SourceGraphic"/><feMergeNode in="wm"/></feMerge>
</filter>
<clipPath id="ringclip"><circle cx="1089" cy="583.8" r="62"/></clipPath>
</defs><rect x="323" y="484" width="929" height="203" fill="#000"/><polygon points="335,522 354,522 354,661 561,661 561,677 341,686" fill="#4b4a5e" filter="url(#dnoise)"/><polygon points="385,513 517,513 517,516 385,516" fill="#4b4a5e" filter="url(#dnoise)"/><polygon points="745,512 844,512 844,510 892,510 892,501 1010,501 1010,504 1032,504 1032,506 1155,506 1155,516 745,516" fill="#4b4a5e" filter="url(#dnoise)"/><polygon points="1158,518 1169,518 1169,542 1180,542 1180,556 1184,556 1184,622 1177,622 1177,648 1168,648 1168,660 1158,660" fill="#4b4a5e" filter="url(#dnoise)"/><polygon points="718,661 774,661 774,665 718,665" fill="#4b4a5e" filter="url(#dnoise)"/><polygon points="872,661 985,661 985,677 872,677" fill="#4b4a5e" filter="url(#dnoise)"/><polygon points="990,661 1025,661 1025,669 990,669" fill="#4b4a5e" filter="url(#dnoise)"/><polygon points="1048,661 1130,661 1130,669 1048,669" fill="#4b4a5e" filter="url(#dnoise)"/><rect x="354" y="515.5" width="804.5" height="145.5" fill="#9b95a9" filter="url(#noise)"/><polygon points="354,515 385,515 385,521 354,521" fill="#000"/><polygon points="517.7,515 628,515 628,549.9 520,549.9 520,542.3 517.7,542.3" fill="#000"/><polygon points="628,515 745,515 745,517.5 628,520" fill="#000"/><rect x="842" y="515" width="3" height="14" fill="#000"/><path d="M386 540.3 L477 540.3 L500 565.6 L500 574 L675 574 L675 551 L692 535.3 L788 535.3 L797 551 L797 572 L882 572 L884 560 Q895 532 925 526.2 L958 526.2 Q990 535 996.5 575 L1027 575 L1027 593.7 L996.5 600 Q993 640 958 648.5 L925 648.5 Q890 642 882 605 L797 605 L797 628 L788 639.5 L688 639.5 L675 628 L675 609 L502.5 609 L502.5 617.5 L478 654.8 L392 654.8 Q372 650 369.3 635 L369.3 558 Q372 542 386 540.3 Z" fill="#7e9c28" filter="url(#gnoise)"/><circle cx="1089" cy="583.8" r="62" fill="#7e9c28" filter="url(#gnoise)"/><rect x="924.7" y="561.4" width="34.6" height="47" fill="#9b95a9" filter="url(#noise)"/><circle cx="1089.5" cy="583.3" r="36" fill="#9b95a9" filter="url(#noise)"/><rect x="1120" y="571.4" width="15" height="9.6" fill="#9b95a9"/><rect x="1120" y="586.5" width="15" height="8.8" fill="#9b95a9"/><rect x="366.8" y="583" width="8" height="29" fill="#d4a828"/><circle cx="460.1" cy="608.9" r="12" fill="#d8802c"/><circle cx="435.9" cy="622.9" r="12" fill="#d8802c"/><circle cx="411.7" cy="608.9" r="12" fill="#d8802c"/><circle cx="411.7" cy="580.9" r="12" fill="#d8802c"/><circle cx="435.9" cy="566.9" r="12" fill="#d8802c"/><circle cx="460.1" cy="580.9" r="12" fill="#d8802c"/><circle cx="435.9" cy="594.9" r="29" fill="#d89080"/><circle cx="435.9" cy="594.9" r="27" fill="#c4b870"/><path d="M435.9 567.9 A27 27 0 0 1 435.9 621.9 Z" fill="#c8a040"/><text x="0" y="0" font-family="Liberation Sans" font-size="18" font-weight="bold" fill="#e0883a" transform="translate(478 549) rotate(180)">60</text><path d="M448 561.0 L483.0 586.3 L500 586.3" stroke="#f0982e" stroke-width="3.4" fill="none"/><path d="M445 564.5 L484.5 591.5 L500 591.5" stroke="#f0982e" stroke-width="3.4" fill="none"/><path d="M442 568.0 L486.0 596.6999999999999 L500 596.6999999999999" stroke="#f0982e" stroke-width="3.4" fill="none"/><path d="M439 571.5 L487.5 601.9 L500 601.9" stroke="#f0982e" stroke-width="3.4" fill="none"/><path d="M455 632 L495 604 M460 636 L498 606" stroke="#d8802c" stroke-width="1.6" fill="none"/><path d="M398 570 L408 559 L452 559" stroke="#d8802c" stroke-width="1.5" fill="none" opacity="0.8"/><path d="M392 628 L405 642 L470 642" stroke="#d8802c" stroke-width="1.5" fill="none" opacity="0.8"/><rect x="500" y="578" width="175" height="29" fill="#b8862e"/><path d="M500 586.3 L675 586.3" stroke="#f0982e" stroke-width="3.4" fill="none"/><path d="M500 591.5 L675 591.5" stroke="#f0982e" stroke-width="3.4" fill="none"/><path d="M500 596.6999999999999 L675 596.6999999999999" stroke="#f0982e" stroke-width="3.4" fill="none"/><path d="M500 601.9 L675 601.9" stroke="#f0982e" stroke-width="3.4" fill="none"/><path d="M515 602 L536 602 L552 584 L600 584" stroke="#f0982e" stroke-width="3.4" fill="none"/><path d="M592 584 L592 608 M566 592 L552 608 M530 585 L545 602" stroke="#f0982e" stroke-width="3" fill="none"/><rect x="688" y="556" width="100" height="66" fill="#c08a2e"/><rect x="724" y="562" width="34" height="56" fill="#a89a3a"/><circle cx="690" cy="570" r="6.5" fill="#d8802c"/><circle cx="692" cy="584" r="6.5" fill="#d8802c"/><circle cx="789" cy="566" r="6.5" fill="#d8802c"/><circle cx="791" cy="608" r="6.5" fill="#d8802c"/><circle cx="689" cy="612" r="6.5" fill="#d8802c"/><circle cx="745" cy="545" r="6.5" fill="#d8802c"/><circle cx="744" cy="628" r="6.5" fill="#d8802c"/><circle cx="700" cy="548" r="6.5" fill="#d8802c"/><circle cx="712" cy="632" r="6.5" fill="#d8802c"/><circle cx="768" cy="546" r="6.5" fill="#d8802c"/><circle cx="780" cy="632" r="6.5" fill="#d8802c"/><path d="M722 550 L760 550 M722 624 L760 624 M700 579 L722 579 M700 597 L722 597 M725 550 V565" stroke="#f0982e" stroke-width="3.4" fill="none"/><path d="M733 553 L768 585 L797 585" stroke="#f0982e" stroke-width="3" fill="none"/><path d="M740 553 L772 589 L797 589" stroke="#f0982e" stroke-width="3" fill="none"/><path d="M747 553 L776 593 L797 593" stroke="#f0982e" stroke-width="3" fill="none"/><path d="M754 553 L780 597 L797 597" stroke="#f0982e" stroke-width="3" fill="none"/><path d="M761 553 L784 601 L797 601" stroke="#f0982e" stroke-width="3" fill="none"/><path d="M675 580 L703 580 L724 600" stroke="#f0982e" stroke-width="3" fill="none"/><path d="M675 586 L701 586 L724 606" stroke="#f0982e" stroke-width="3" fill="none"/><path d="M675 592 L699 592 L724 612" stroke="#f0982e" stroke-width="3" fill="none"/><path d="M728 600 L752 576 M730 612 L756 588" stroke="#d07020" stroke-width="2.5" fill="none"/><rect x="693.4000000000001" y="543.9000000000001" width="21.6" height="21.6" fill="#c9c3dc" transform="rotate(45 704.2 554.7)"/><rect x="764.6" y="543.3000000000001" width="21.6" height="21.6" fill="#c9c3dc" transform="rotate(45 775.4 554.1)"/><rect x="694.5" y="612.2" width="21.6" height="21.6" fill="#c9c3dc" transform="rotate(45 705.3 623)"/><rect x="765.8000000000001" y="611.7" width="21.6" height="21.6" fill="#c9c3dc" transform="rotate(45 776.6 622.5)"/><rect x="797" y="576" width="90" height="28" fill="#b8862e"/><path d="M797 579.5 L887 579.5" stroke="#f0982e" stroke-width="3.2" fill="none"/><path d="M797 585.0 L887 585.0" stroke="#f0982e" stroke-width="3.2" fill="none"/><path d="M797 590.5 L887 590.5" stroke="#f0982e" stroke-width="3.2" fill="none"/><path d="M797 596.0 L887 596.0" stroke="#f0982e" stroke-width="3.2" fill="none"/><path d="M797 601.5 L887 601.5" stroke="#f0982e" stroke-width="3.2" fill="none"/><path d="M884.0 600.0 L889 565 Q899 537 925.0 532 L958.0 532 Q986 539 991 575 L992 600" stroke="#f0982e" stroke-width="3.6" fill="none"/><path d="M885.8 598.8 L895 565 Q905 543 928.0 538 L955.0 538 Q980 545 985 575 L986 600" stroke="#f0982e" stroke-width="3.6" fill="none"/><path d="M887.6 597.6 L901 565 Q911 549 931.0 544 L952.0 544 Q974 551 979 575 L980 600" stroke="#f0982e" stroke-width="3.6" fill="none"/><path d="M889.4 596.4 L907 565 Q917 555 934.0 550 L949.0 550 Q968 557 973 575 L974 600" stroke="#f0982e" stroke-width="3.6" fill="none"/><path d="M897 612 L985 612 Q982 640 958 646 L925 646 Q902 640 897 612Z" fill="#b8802c" opacity="0.75"/><rect x="919" y="556" width="45" height="57" fill="none" stroke="#c8a030" stroke-width="9"/><path d="M903 570 L903 615 Q903 624 915 624 L972 624 Q980 624 980 612 L980 565" stroke="#f0982e" stroke-width="3.6" fill="none"/><path d="M897 630 Q925 646 960 646 Q986 636 993 608" stroke="#d8802c" stroke-width="5" fill="none" opacity="0.9"/><path d="M887 578 L905 578 M887 586 L905 586 M887 594 L905 594" stroke="#f0982e" stroke-width="3" fill="none"/><circle cx="978" cy="607" r="5" fill="none" stroke="#f0982e" stroke-width="2"/><path d="M996 579 L1040 579 M996 586 L1040 586" stroke="#f0982e" stroke-width="3" fill="none"/><circle cx="1089" cy="583.8" r="48" fill="none" stroke="#d8802c" stroke-width="14" stroke-dasharray="42 33.4" stroke-dashoffset="-17.2"/><circle cx="1089" cy="583.8" r="48" fill="none" stroke="#d8c030" stroke-width="7" stroke-dasharray="8 14 8 45.4" stroke-dashoffset="-21.2" opacity="0.85"/><path d="M1040 586 Q1050 590 1050 610 Q1065 640 1082 640 Q1090 628 1100 640 Q1125 635 1138 600 Q1142 580 1140 565 Q1125 530 1089 530 Q1055 530 1040 560" stroke="#f0982e" stroke-width="3.2" fill="none"/><path d="M1068 527 L1110 527" stroke="#d8802c" stroke-width="4" fill="none"/><circle cx="1090" cy="632" r="7.5" fill="#f0b868"/><circle cx="1043" cy="575" r="2.5" fill="#d8802c"/><circle cx="1144" cy="602" r="2.5" fill="#d8802c"/><rect x="391" y="625" width="730.8" height="36" fill="#f4f4ff" opacity="0.4"/><polygon points="560.3,640.8 653.7,638.4 653.7,661 560.3,661" fill="#6b6b6b"/><polygon points="849,635 853,635 853,644.4 862.7,644.4 862.7,661 849,661" fill="#6b6b6b"/><rect x="611" y="484" width="9.5" height="203" fill="#008282"/><rect x="611" y="516" width="9.5" height="145" fill="#00ffff"/><rect x="915" y="484" width="9" height="203" fill="#008282"/><rect x="915" y="516" width="9" height="145" fill="#00ffff"/><rect x="1225.5" y="484" width="10.0" height="203" fill="#008282"/><path d="M354.5 661 V515.5 M1158.5 515.5 V661" fill="none" stroke="#f0f0d8" stroke-width="1"/><path d="M354.5 515.5 H1158.5" stroke="#90a088" stroke-width="1" opacity="0.6"/><path d="M354 515.5 H385 M517.7 515.5 H745 M842 515.5 H845 M1022 515.5 H1158.5" stroke="#fff" stroke-width="1"/><path d="M354.5 661.5 H1158.5" stroke="#4a4a28" stroke-width="1"/><rect x="611.5" y="515" width="8.5" height="1.2" fill="#e00000"/><rect x="611.5" y="660.8" width="8.5" height="1.2" fill="#c00000"/><rect x="915.5" y="515" width="8" height="1.2" fill="#e00000"/><rect x="915.5" y="660.8" width="8" height="1.2" fill="#c00000"/></svg>
<div style="position:absolute;left:1298px;top:0px;width:10px;height:977px;background:#000;"></div>
<div style="position:absolute;left:0px;top:967px;width:1308px;height:10px;background:#000;"></div>
</body></html>
